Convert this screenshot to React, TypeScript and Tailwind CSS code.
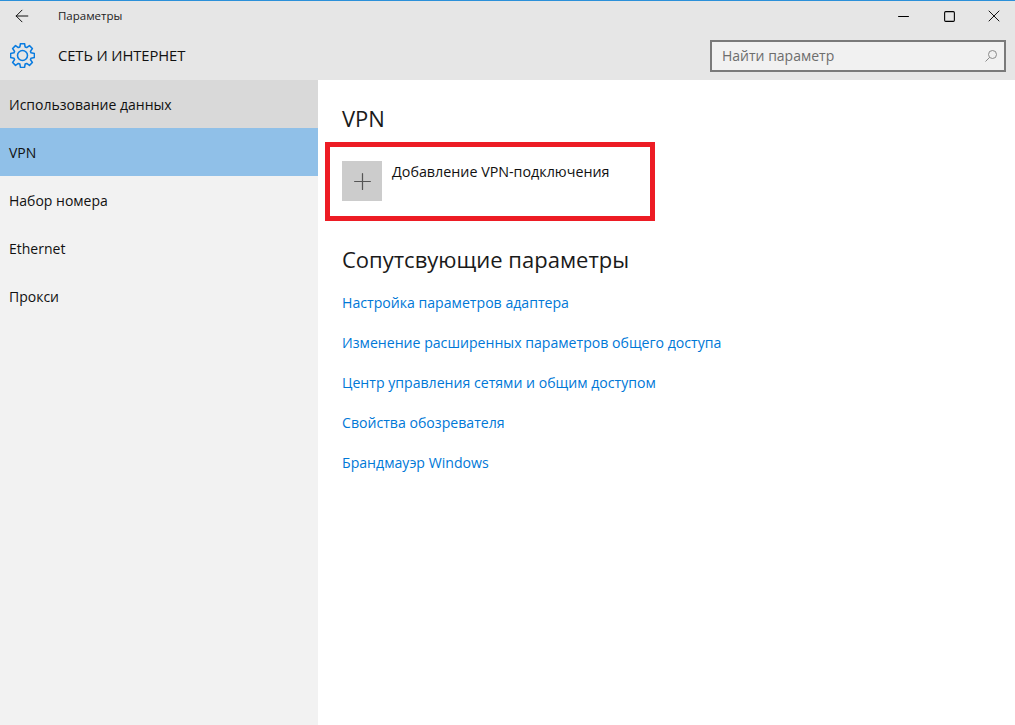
import { ArrowLeft, Minus, Plus, Square, X } from 'lucide-react';

const navItems = ['Использование данных', 'VPN', 'Набор номера', 'Ethernet', 'Прокси'];

const links = [
  'Настройка параметров адаптера',
  'Изменение расширенных параметров общего доступа',
  'Центр управления сетями и общим доступом',
  'Свойства обозревателя',
  'Брандмауэр Windows',
];

// 8 tooth outline around the centre of a 24 box
const gearPoints = Array.from({ length: 8 }, (_, i) => {
  const a = (i * Math.PI) / 4;
  return [
    [8.6, a - 0.3],
    [11.6, a - 0.17],
    [11.6, a + 0.17],
    [8.6, a + 0.3],
  ]
    .map(([r, t]) => `${(12 + r * Math.sin(t)).toFixed(2)},${(12 - r * Math.cos(t)).toFixed(2)}`)
    .join(' ');
}).join(' ');

function GearIcon() {
  return (
    <svg width="25" height="25" viewBox="0 0 24 24" fill="none" stroke="#0a7ce0" strokeWidth="1.5" strokeLinejoin="round">
      <polygon points={gearPoints} />
      <circle cx="12" cy="12" r="4.8" />
    </svg>
  );
}

function SearchIcon() {
  return (
    <svg width="14" height="14" viewBox="0 0 14 14" fill="none" stroke="#8a8a8a" strokeWidth="1">
      <circle cx="8.5" cy="5.5" r="4" />
      <path d="M5.6 8.4 1.5 12.5" />
    </svg>
  );
}

export default function App() {
  return (
    <div className="flex h-[725px] w-[1015px] flex-col overflow-hidden bg-white font-['Open_Sans','Noto_Sans',sans-serif] text-black">
      <header className="h-[80px] shrink-0 border-t border-[#2b90d9] bg-[#e6e6e6]">
        <div className="flex h-[30px] items-center">
          <div className="flex w-[58px] justify-center pr-[15px]">
            <ArrowLeft size={20} strokeWidth={1.1} />
          </div>
          <span className="text-[11.5px] text-[#222]">Параметры</span>
          <div className="ml-auto flex items-center">
            <div className="flex w-[46px] justify-center"><Minus size={17} strokeWidth={1.5} /></div>
            <div className="flex w-[46px] justify-center"><Square size={13} strokeWidth={2} /></div>
            <div className="flex w-[43px] justify-center"><X size={20} strokeWidth={1.1} /></div>
          </div>
        </div>
        <div className="flex h-[49px] items-center">
          <div className="flex w-[58px] justify-start pl-[10px]">
            <GearIcon />
          </div>
          <span className="text-[14.8px] leading-none font-medium tracking-[-0.1px] text-[#111]">СЕТЬ И ИНТЕРНЕТ</span>
          <div className="mr-[9px] ml-auto flex h-[32px] w-[296px] items-center justify-between border-2 border-[#7a7a7a] bg-[#f1f1f1] pr-[6px] pl-[10px]">
            <span className="text-[14px] text-[#6d6d6d]">Найти параметр</span>
            <SearchIcon />
          </div>
        </div>
      </header>
      <div className="flex min-h-0 flex-1">
        <nav className="w-[318px] shrink-0 bg-[#f2f2f2]">
          {navItems.map((item) => (
            <div
              key={item}
              className={
                'flex h-[48px] items-center pl-[9px] text-[14px] text-[#111] ' +
                (item === 'VPN' ? 'bg-[#90c0e8]' : item === 'Использование данных' ? 'bg-[#d9d9d9]' : '')
              }
            >
              {item}
            </div>
          ))}
        </nav>
        <main className="flex-1 pt-[21px] pl-[7px]">
          <h1 className="pl-[17px] text-[22px] leading-[34px] text-[#1a1a1a]">VPN</h1>
          <div className="mt-[7px] h-[79px] w-[330px] border-[5px] border-[#ed1c24] pt-[14px] pl-[12px]">
            <div className="flex items-start gap-[10px]">
              <div className="flex h-[40px] w-[40px] items-center justify-center bg-[#cccccc]">
                <Plus size={27} strokeWidth={1.1} className="text-[#555]" />
              </div>
              <span className="mt-[1px] text-[14.3px] leading-[20px] text-[#111]">Добавление VPN-подключения</span>
            </div>
          </div>
          <h2 className="mt-[21px] pl-[17px] text-[22px] leading-[34px] text-[#1a1a1a]">Сопутсвующие параметры</h2>
          <ul className="mt-[17px] flex flex-col gap-[20px] pl-[17px]">
            {links.map((link) => (
              <li key={link} className="text-[14.12px] leading-[20px] text-[#0078d7]">{link}</li>
            ))}
          </ul>
        </main>
      </div>
    </div>
  );
}
